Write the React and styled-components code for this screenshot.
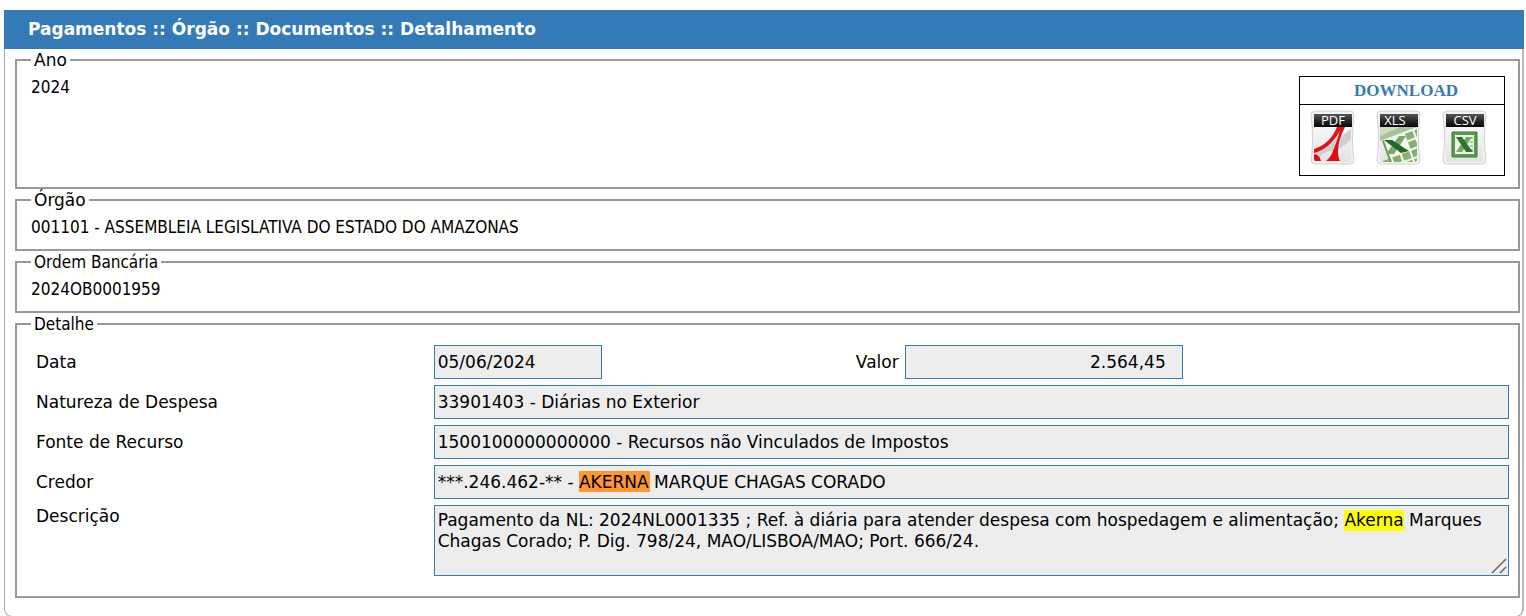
import React from 'react';
import styled, { createGlobalStyle } from 'styled-components';

const GlobalStyle = createGlobalStyle`
  * {
    box-sizing: border-box;
  }
  body {
    margin: 0;
    background: #fff;
    color: #000;
    font-family: 'DejaVu Sans', Verdana, sans-serif;
    font-size: 17px;
  }
`;

const Page = styled.main`
  padding: 10px 2px 0 4px;
`;

const TitleBar = styled.h1`
  margin: 0;
  padding: 0 24px;
  background: #337ab7;
  color: #fff;
  font-size: 17px;
  line-height: 39px;
  font-weight: bold;
`;

const Panel = styled.div`
  border: 1px solid #aaa;
  border-right: 2px solid #bbb;
  border-top: 0;
  border-radius: 0 0 8px 8px;
  padding: 0 2px 18px 10px;
  display: flex;
  flex-direction: column;
`;

const Section = styled.fieldset`
  margin: 0;
  min-width: 0;
  padding: 5px 13px ${({ $bottom }) => $bottom || 11}px 14px;
  border: 2px solid #999;
  font-family: 'DejaVu Sans Condensed', 'DejaVu Sans', sans-serif;
  font-size: 17px;
  line-height: 22px;
`;

const Legend = styled.legend`
  padding: 0 3px;
  font-family: ${({ $wide }) => ($wide ? "'DejaVu Sans', Verdana, sans-serif" : 'inherit')};
`;

const SectionBody = styled.div`
  display: flex;
  justify-content: space-between;
  align-items: flex-start;
`;

const DownloadBox = styled.section`
  width: 206px;
  border: 1px solid #000;
`;

const DownloadTitle = styled.h2`
  margin: 0;
  padding-left: 8px;
  border-bottom: 1px solid #000;
  color: #337ab7;
  font-family: 'Liberation Serif', serif;
  font-size: 17px;
  line-height: 27px;
  text-align: center;
`;

const DownloadLinks = styled.div`
  display: flex;
  justify-content: space-between;
  padding: 5px 16px 7px 10px;
`;

const DownloadLink = styled.a`
  display: block;
  height: 58px;
`;

const Form = styled.form`
  display: grid;
  grid-template-columns: 27% 1fr;
  row-gap: 6px;
  padding: 5px 9px 0 5px;
  margin-right: -13px;
  font-family: 'DejaVu Sans', Verdana, sans-serif;
  font-size: 17px;
`;

const Label = styled.label`
  line-height: 34px;
`;

const TopLabel = styled(Label)`
  line-height: 22px;
`;

const Inline = styled.div`
  display: flex;
  justify-content: space-between;
  max-width: 749px;
`;

const Pair = styled.div`
  display: flex;
  gap: 6px;
`;

const Field = styled.input`
  width: ${({ $width }) => $width || '100%'};
  height: 34px;
  padding: 0 ${({ $align }) => ($align ? 16 : 3)}px 0 3px;
  border: 1px solid #337ab7;
  border-radius: 0;
  background: #ededed;
  color: #000;
  font: inherit;
  text-align: ${({ $align }) => $align || 'left'};
`;

const CreditorField = styled(Field)`
  background: linear-gradient(#ff9632, #ff9632) 144px 5px / 71px 21px no-repeat #ededed;
`;

const DescriptionWrapper = styled.div`
  position: relative;
`;

const Description = styled.textarea`
  display: block;
  width: 100%;
  height: 71px;
  padding: 4px 3px;
  border: 1px solid #337ab7;
  background: linear-gradient(#ff0, #ff0) 909px 4px / 60px 21px no-repeat #ededed;
  color: #000;
  font: inherit;
  line-height: 21px;
  overflow: hidden;
  resize: none;
`;

const Grip = styled.svg`
  position: absolute;
  right: 2px;
  bottom: 2px;
`;

const IconBase = ({ label, textX = 23, children }) => (
  <svg width="46" height="58" viewBox="0 0 46 58" role="img" aria-label={label}>
    <defs>
      <linearGradient id={`tab${label}`} x1="0" y1="0" x2="0" y2="1">
        <stop offset="0" stopColor="#555" />
        <stop offset="0.5" stopColor="#292929" />
        <stop offset="1" stopColor="#080808" />
      </linearGradient>
      <linearGradient id={`paper${label}`} x1="0" y1="0" x2="0" y2="1">
        <stop offset="0" stopColor="#fff" />
        <stop offset="1" stopColor="#e2e2e2" />
      </linearGradient>
    </defs>
    <path
      d="M6 1H40Q44 1 44 5L43 15Q42 32 43 41L44 50Q44 54 40 54H5Q1 54 1 50L2 41Q3 32 2 15L1 5Q1 1 6 1Z"
      fill="#f1f1f1"
      stroke="#d2d2d2"
    />
    <path d="M4 5H41V50Q41 52 39 52H6Q4 52 4 50Z" fill={`url(#paper${label})`} />
    {children}
    <path d="M4 4H42V17H4Z" fill={`url(#tab${label})`} />
    <text x={textX} y="15" fill="#fff" fontFamily="Open Sans, sans-serif" fontSize="13" textAnchor="middle">
      {label}
    </text>
  </svg>
);

const PdfIcon = () => (
  <IconBase label="PDF">
    <path d="M5 40Q20 35 29 28L41 19V29Q34 38 24 40Q14 42 5 49Z" fill="#cfcfcf" />
    <path d="M28 17H35Q28 30 28 41Q28 48 30 51H16Q21 47 23 41Q27 32 30 20Z" fill="#e10e12" />
    <path d="M27 17Q20 34 4 39V43Q22 38 32 17Z" fill="#e01317" />
    <path d="M4 44Q10 45 11 51H6Q4 51 4 49Z" fill="#e10e12" />
  </IconBase>
);

const XlsIcon = () => (
  <IconBase label="XLS" textX={19}>
    <clipPath id="xlsSheet">
      <path d="M4 17H41V50Q41 52 39 52H6Q4 52 4 50Z" />
    </clipPath>
    <g clipPath="url(#xlsSheet)">
      <path d="M4 17H41L4 31Z" fill="#a9c29b" />
      <path d="M4 17H24L4 26Z" fill="#cbdcc2" />
      <g transform="rotate(-20 6 31)">
        <path d="M6 31H50V72H6Z" fill="#f3f8ef" />
        <path d="M30 32H38V39H30ZM40 32H48V39H40ZM30 41H38V48H30ZM40 41H48V48H40ZM30 50H38V57H30ZM20 50H28V57H20ZM10 50H18V57H10ZM30 59H38V66H30ZM20 59H28V66H20ZM0 50H8V57H0Z" fill="#88b06e" />
        <path d="M6 31H8V60H6Z" fill="#6c9b58" />
      </g>
      <path d="M23 26H30L18 44H10Z" fill="#78a968" />
      <path d="M8 30H16L33 41L25 43Z" fill="#25682b" />
    </g>
  </IconBase>
);

const CsvIcon = () => (
  <IconBase label="CSV">
    <path d="M10 22H35V47H10Z" fill="#5a9a4e" stroke="#3c7c36" />
    <path d="M13 25H32V44H13Z" fill="#eef6e9" />
    <path d="M27 28H31M28 32H31M28 36H31M28 40H31" stroke="#a9cd9f" strokeWidth="2" />
    <path d="M24 27H30L20 42H14Z" fill="#72a764" />
    <path d="M14 27H20L31 42H24Z" fill="#2b7530" />
  </IconBase>
);

const App = () => {
  return (
    <>
      <GlobalStyle />
      <Page>
        <TitleBar>Pagamentos :: Órgão :: Documentos :: Detalhamento</TitleBar>
        <Panel>
          <Section>
            <Legend $wide>Ano</Legend>
            <SectionBody>
              <span>2024</span>
              <DownloadBox>
                <DownloadTitle>DOWNLOAD</DownloadTitle>
                <DownloadLinks>
                  <DownloadLink href="#pdf"><PdfIcon /></DownloadLink>
                  <DownloadLink href="#xls"><XlsIcon /></DownloadLink>
                  <DownloadLink href="#csv"><CsvIcon /></DownloadLink>
                </DownloadLinks>
              </DownloadBox>
            </SectionBody>
          </Section>

          <Section>
            <Legend $wide>Órgão</Legend>
            001101 - ASSEMBLEIA LEGISLATIVA DO ESTADO DO AMAZONAS
          </Section>

          <Section>
            <Legend>Ordem Bancária</Legend>
            2024OB0001959
          </Section>

          <Section $bottom={20}>
            <Legend>Detalhe</Legend>
            <Form>
              <Label htmlFor="data">Data</Label>
              <Inline>
                <Field id="data" $width="168px" readOnly defaultValue="05/06/2024" />
                <Pair>
                  <Label htmlFor="valor">Valor</Label>
                  <Field id="valor" $width="278px" $align="right" readOnly defaultValue="2.564,45" />
                </Pair>
              </Inline>

              <Label htmlFor="natureza">Natureza de Despesa</Label>
              <Field id="natureza" readOnly defaultValue="33901403 - Diárias no Exterior" />

              <Label htmlFor="fonte">Fonte de Recurso</Label>
              <Field id="fonte" readOnly defaultValue="1500100000000000 - Recursos não Vinculados de Impostos" />

              <Label htmlFor="credor">Credor</Label>
              <CreditorField id="credor" readOnly defaultValue="***.246.462-** - AKERNA MARQUE CHAGAS CORADO" />

              <TopLabel htmlFor="descricao">Descrição</TopLabel>
              <DescriptionWrapper>
                <Description
                  id="descricao"
                  readOnly
                  defaultValue="Pagamento da NL: 2024NL0001335 ; Ref. à diária para atender despesa com hospedagem e alimentação; Akerna Marques Chagas Corado; P. Dig. 798/24, MAO/LISBOA/MAO; Port. 666/24."
                />
                <Grip width="16" height="16" viewBox="0 0 16 16" aria-hidden="true">
                  <path d="M1 15L15 1M9 15L15 9" stroke="#666" strokeWidth="1.5" />
                </Grip>
              </DescriptionWrapper>
            </Form>
          </Section>
        </Panel>
      </Page>
    </>
  );
};

export default App;
